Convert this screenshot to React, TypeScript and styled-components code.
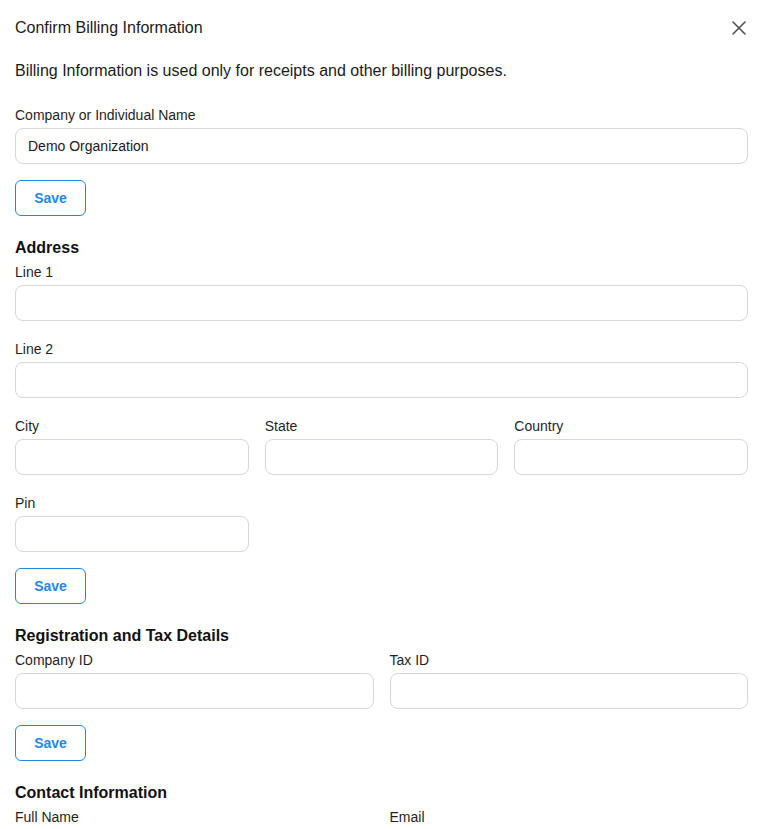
import React from "react";
import styled, { createGlobalStyle } from "styled-components";

const Global = createGlobalStyle`
  html, body { margin: 0; padding: 0; background: #ffffff; }
  body { font-family: "Liberation Sans", Arial, sans-serif; color: #1a1a1a; }
  * { box-sizing: border-box; }
`;

const Dialog = styled.div`
  width: 763px;
  padding: 0 15px 40px;
  background: #fff;
`;

const Header = styled.div`
  display: flex;
  align-items: center;
  justify-content: space-between;
  padding-top: 15px;
`;

const Title = styled.h2`
  margin: 0;
  font-size: 16px;
  line-height: 24px;
  font-weight: 400;
  color: #1a1a1a;
`;

const CloseButton = styled.button`
  display: flex;
  align-items: center;
  justify-content: center;
  width: 24px;
  height: 24px;
  margin-right: -3px;
  margin-top: 1px;
  padding: 0;
  border: none;
  background: transparent;
  color: #4a4a4a;
  cursor: pointer;
`;

const Description = styled.p`
  margin: 19px 0 0;
  font-size: 16px;
  line-height: 24px;
  color: #1a1a1a;
`;

const Section = styled.section<{ $first?: boolean }>`
  display: flex;
  flex-direction: column;
  margin-top: ${(p) => (p.$first ? "22px" : "20px")};
`;

const SectionTitle = styled.h3`
  margin: 0 0 2px;
  font-size: 16px;
  line-height: 24px;
  font-weight: 700;
  color: #111;
`;

const Grid = styled.div<{ $cols: number }>`
  display: grid;
  grid-template-columns: repeat(${(p) => p.$cols}, minmax(0, 1fr));
  column-gap: 16px;
  row-gap: 18px;
`;

const Field = styled.div`
  display: flex;
  flex-direction: column;
  gap: 2px;
`;

const Label = styled.label`
  font-size: 14px;
  line-height: 21px;
  color: #1f1f1f;
`;

const Input = styled.input`
  width: 100%;
  height: 36px;
  padding: 0 12px;
  border: 1px solid #d2d8de;
  border-radius: 8px;
  background: #fff;
  font-family: "Liberation Sans", Arial, sans-serif;
  font-size: 14px;
  color: #1a1a1a;
  outline: none;
`;

const SaveButton = styled.button`
  align-self: flex-start;
  width: 71px;
  height: 36px;
  margin-top: 16px;
  border: 1px solid #1e88e5;
  border-radius: 6px;
  background: #fff;
  color: #1e88e5;
  font-family: "Liberation Sans", Arial, sans-serif;
  font-size: 14px;
  font-weight: 700;
  cursor: pointer;
`;

type F = { label: string; value?: string };

const Fields: React.FC<{ cols: number; fields: F[] }> = ({ cols, fields }) => (
  <Grid $cols={cols}>
    {fields.map((f) => (
      <Field key={f.label}>
        <Label>{f.label}</Label>
        <Input defaultValue={f.value ?? ""} />
      </Field>
    ))}
  </Grid>
);

export default function App() {
  return (
    <>
      <Global />
      <Dialog>
        <Header>
          <Title>Confirm Billing Information</Title>
          <CloseButton aria-label="Close">
            <svg width="14" height="14" viewBox="0 0 14 14" fill="none">
              <path d="M1 1L13 13M13 1L1 13" stroke="currentColor" strokeWidth="1.5" strokeLinecap="round" />
            </svg>
          </CloseButton>
        </Header>
        <Description>
          Billing Information is used only for receipts and other billing purposes.
        </Description>

        <Section $first>
          <Fields cols={1} fields={[{ label: "Company or Individual Name", value: "Demo Organization" }]} />
          <SaveButton>Save</SaveButton>
        </Section>

        <Section>
          <SectionTitle>Address</SectionTitle>
          <Grid $cols={1}>
            <Fields cols={1} fields={[{ label: "Line 1" }, { label: "Line 2" }]} />
            <Fields cols={3} fields={[{ label: "City" }, { label: "State" }, { label: "Country" }, { label: "Pin" }]} />
          </Grid>
          <SaveButton>Save</SaveButton>
        </Section>

        <Section>
          <SectionTitle>Registration and Tax Details</SectionTitle>
          <Fields cols={2} fields={[{ label: "Company ID" }, { label: "Tax ID" }]} />
          <SaveButton>Save</SaveButton>
        </Section>

        <Section>
          <SectionTitle>Contact Information</SectionTitle>
          <Fields cols={2} fields={[{ label: "Full Name" }, { label: "Email" }, { label: "Phone" }]} />
          <SaveButton>Save</SaveButton>
        </Section>
      </Dialog>
    </>
  );
}
